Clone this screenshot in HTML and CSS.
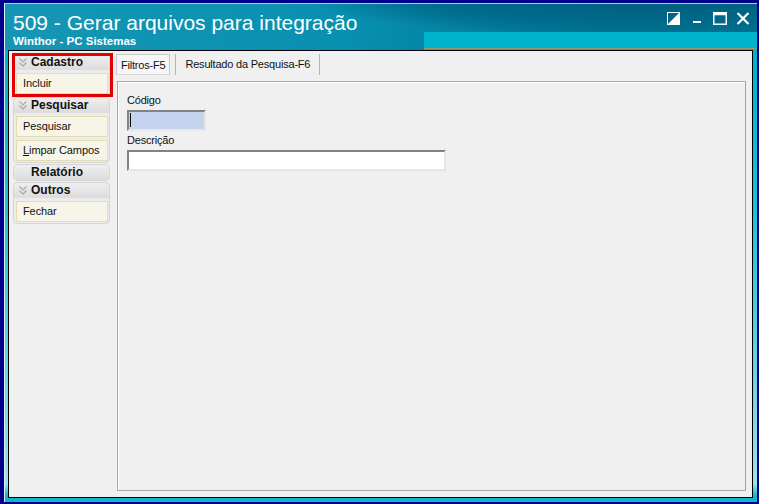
FILE: index.html
```html
<!DOCTYPE html>
<html lang="pt-br">
<head>
    <meta charset="UTF-8">
    <title>509 - Gerar arquivos para integração</title>
    <link rel="stylesheet" href="styles.css">
</head>
<body>
    <div class="window">
        <div class="titlebar">
            <div class="titles">
                <div class="title">509 - Gerar arquivos para integração</div>
                <div class="subtitle">Winthor - PC Sistemas</div>
            </div>
            <div class="controls">
                <svg width="14" height="14" viewBox="0 0 14 14"><rect x="0.5" y="0.5" width="12" height="12" fill="none" stroke="#fff"/><polygon points="1,12 12,1 12,12" fill="#fff"/></svg>
                <svg width="14" height="14" viewBox="0 0 14 14"><rect x="3" y="9" width="8" height="2" fill="#fff"/></svg>
                <svg width="14" height="14" viewBox="0 0 14 14"><rect x="0.75" y="0.75" width="12.5" height="11.5" fill="none" stroke="#fff" stroke-width="1.5"/><rect x="0.75" y="0.75" width="12.5" height="2.5" fill="#fff"/></svg>
                <svg width="14" height="14" viewBox="0 0 14 14"><path d="M1.5 1 L12.5 12 M12.5 1 L1.5 12" stroke="#fff" stroke-width="2.2"/></svg>
            </div>
        </div>
        <div class="client">
            <div class="sidebar">
                <div class="group marked">
                    <div class="group-head"><svg class="chev" width="8" height="9" viewBox="0 0 8 9"><path d="M0.5 0.5 L4 4 L7.5 0.5 M0.5 4.5 L4 8 L7.5 4.5" fill="none" stroke="#a9a9a9" stroke-width="1.2"/></svg>Cadastro</div>
                    <div class="item">Incluir</div>
                </div>
                <div class="group">
                    <div class="group-head"><svg class="chev" width="8" height="9" viewBox="0 0 8 9"><path d="M0.5 0.5 L4 4 L7.5 0.5 M0.5 4.5 L4 8 L7.5 4.5" fill="none" stroke="#a9a9a9" stroke-width="1.2"/></svg>Pesquisar</div>
                    <div class="item">Pesquisar</div>
                    <div class="item"><u>L</u>impar Campos</div>
                </div>
                <div class="group solo">
                    <div class="group-head"><span class="chev-blank"></span>Relatório</div>
                </div>
                <div class="group">
                    <div class="group-head"><svg class="chev" width="8" height="9" viewBox="0 0 8 9"><path d="M0.5 0.5 L4 4 L7.5 0.5 M0.5 4.5 L4 8 L7.5 4.5" fill="none" stroke="#a9a9a9" stroke-width="1.2"/></svg>Outros</div>
                    <div class="item">Fechar</div>
                </div>
            </div>
            <div class="main">
                <div class="tabs">
                    <div class="tab active">Filtros-F5</div>
                    <div class="tab">Resultado da Pesquisa-F6</div>
                </div>
                <div class="panel">
                    <label class="lbl">Código</label>
                    <div class="field code"><span class="caret"></span></div>
                    <label class="lbl">Descrição</label>
                    <div class="field desc"></div>
                </div>
            </div>
        </div>
    </div>
</body>
</html>
```

FILE: styles.css
```css
body {
    margin: 0;
    background-color: #00008a;
    font-family: "Liberation Sans", Arial, sans-serif;
    height: 504px;
    overflow: hidden;
}
.window {
    margin: 3px 2px 0 4px;
    height: 499px;
    display: flex;
    flex-direction: column;
    border-top: 1px solid #9fd6e4;
    border-left: 1px solid #d8f0f5;
    box-sizing: border-box;
    background: linear-gradient(to bottom, #0aa3c0 0px, #00b2cc 60px, #1cbfd5 200px, #9fe0ea 480px, #10b4cc 492px);
}
.titlebar {
    height: 46px;
    display: flex;
    justify-content: space-between;
    background:
        linear-gradient(to bottom, transparent 0, transparent 28px, #00b3cd 28px, #00b3cd 44px, #8d9f6c 44px, #8d9f6c 45px, #00b3cd 45px) right / 333px 100% no-repeat,
        radial-gradient(ellipse 520px 60px at 90% -10px, #005a7a 0%, #006b8c 50%, transparent 75%),
        linear-gradient(100deg, #1696b4 0%, #0890b0 45%, #007896 75%, #00708f 100%);
}
.titles {
    padding: 6px 0 0 8px;
    color: #fff;
}
.title {
    font-size: 21px;
    line-height: 25px;
}
.subtitle {
    font-size: 11.5px;
    font-weight: bold;
    line-height: 13px;
}
.controls {
    display: flex;
    gap: 9px;
    align-items: flex-start;
    padding: 8px 7px 0 0;
}
.client {
    flex: 1;
    margin: 0 4px 4px 3px;
    border: 1px solid #000;
    background-color: #f0f0f0;
    display: flex;
    padding: 3px 6px 6px 4px;
}
.sidebar {
    width: 97px;
    margin-right: 6px;
    display: flex;
    flex-direction: column;
    gap: 1px;
}
.group {
    border: 1px solid #d6d6d6;
    border-radius: 4px;
    background-color: #ececec;
    padding: 0 1px 1px 2px;
    position: relative;
}
.group.solo {
    padding-bottom: 0;
}
.group-head {
    height: 15px;
    font-size: 12px;
    font-weight: bold;
    line-height: 15px;
    color: #111;
    display: flex;
    align-items: center;
    background: linear-gradient(to bottom, #eeeeee, #dcdcdc);
    margin: 0 -1px 0 -2px;
    padding-left: 5px;
    border-radius: 4px 4px 0 0;
}
.solo .group-head {
    border-radius: 4px;
}
.chev {
    margin-right: 4px;
}
.chev-blank {
    width: 12px;
}
.item {
    height: 19px;
    margin-top: 3px;
    border: 1px solid #e2ddb5;
    background-color: #f7f5e7;
    font-size: 11px;
    letter-spacing: -0.1px;
    line-height: 19px;
    padding-left: 6px;
    color: #111;
}
.marked::after {
    content: "";
    position: absolute;
    left: -2px;
    top: -2px;
    width: 101px;
    height: 44px;
    box-sizing: border-box;
    border: 3px solid #e30000;
}
.main {
    flex: 1;
    display: flex;
    flex-direction: column;
}
.tabs {
    display: flex;
    height: 21px;
    margin-bottom: 6px;
}
.tab {
    font-size: 11px;
    letter-spacing: -0.2px;
    line-height: 20px;
    padding: 0 9px;
    border-left: 1px solid #b4b4b4;
    border-right: 1px solid #b4b4b4;
    color: #111;
}
.tab.active {
    padding: 0 4px;
    background-color: #f7f7f7;
    border: 1px solid #c8c8c8;
    border-bottom-color: #d8d8d8;
    margin-right: 5px;
    height: 19px;
}
.panel {
    flex: 1;
    margin-left: 1px;
    border: 1px solid #a8a8a8;
    border-right-color: #a0a0a0;
    box-shadow: inset 1px 1px 0 #ffffff;
    padding: 12px 0 0 9px;
    display: flex;
    flex-direction: column;
    align-items: flex-start;
}
.lbl {
    font-size: 11px;
    letter-spacing: -0.2px;
    line-height: 13px;
    color: #111;
    margin-bottom: 3px;
}
.field {
    height: 17px;
    border: 2px solid #828282;
    border-right-color: #e6e6e6;
    border-bottom-color: #e6e6e6;
    margin-bottom: 3px;
    position: relative;
}
.code {
    width: 75px;
    background-color: #c5d3ef;
}
.desc {
    width: 315px;
    background-color: #fff;
}
.caret {
    position: absolute;
    left: 1px;
    top: 1px;
    width: 1px;
    height: 14px;
    background-color: #000;
}
```
